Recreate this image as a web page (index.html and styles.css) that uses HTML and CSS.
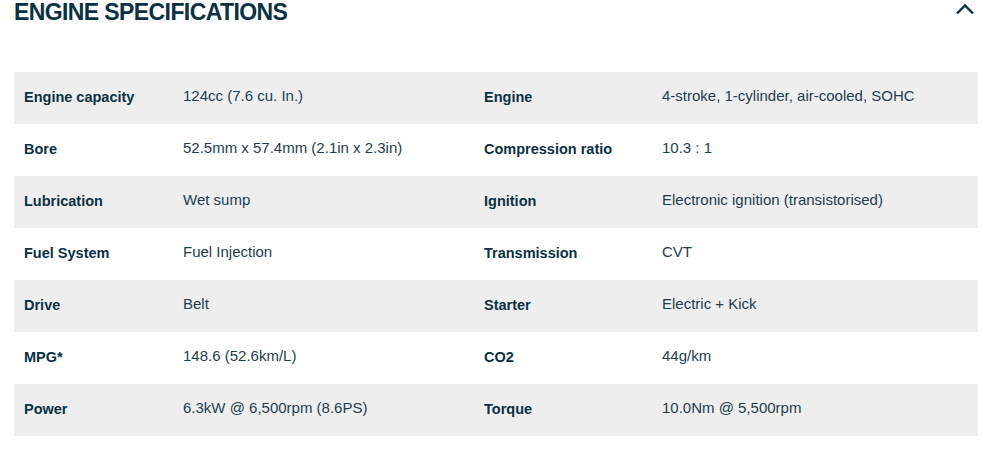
FILE: index.html
```html
<!DOCTYPE html>
<html>
<head>
<meta charset="utf-8">
<link rel="stylesheet" href="styles.css">
</head>
<body>
<section class="specs">
  <div class="specs-head">
    <h2 class="specs-title">ENGINE SPECIFICATIONS</h2>
    <svg class="chevron" width="20" height="12" viewBox="0 0 20 12"><path d="M2 10.5 L10 2.5 L18 10.5" fill="none" stroke="#0b3142" stroke-width="2.4"/></svg>
  </div>
  <div class="specs-table">
    <div class="row alt"><div class="lbl">Engine capacity</div><div class="val">124cc (7.6 cu. In.)</div><div class="lbl">Engine</div><div class="val">4-stroke, 1-cylinder, air-cooled, SOHC</div></div>
    <div class="row"><div class="lbl">Bore</div><div class="val">52.5mm x 57.4mm (2.1in x 2.3in)</div><div class="lbl">Compression ratio</div><div class="val">10.3 : 1</div></div>
    <div class="row alt"><div class="lbl">Lubrication</div><div class="val">Wet sump</div><div class="lbl">Ignition</div><div class="val">Electronic ignition (transistorised)</div></div>
    <div class="row"><div class="lbl">Fuel System</div><div class="val">Fuel Injection</div><div class="lbl">Transmission</div><div class="val">CVT</div></div>
    <div class="row alt"><div class="lbl">Drive</div><div class="val">Belt</div><div class="lbl">Starter</div><div class="val">Electric + Kick</div></div>
    <div class="row"><div class="lbl">MPG*</div><div class="val">148.6 (52.6km/L)</div><div class="lbl">CO2</div><div class="val">44g/km</div></div>
    <div class="row alt"><div class="lbl">Power</div><div class="val">6.3kW @ 6,500rpm (8.6PS)</div><div class="lbl">Torque</div><div class="val">10.0Nm @ 5,500rpm</div></div>
  </div>
</section>
</body>
</html>
```
FILE: styles.css
```css
html, body { margin: 0; padding: 0; background: #fff; }
body { font-family: "Liberation Sans", Arial, sans-serif; color: #0b3142; }
.specs { padding: 0 14px; }
.specs-head { display: flex; justify-content: space-between; align-items: flex-start; height: 72px; }
.specs-title { margin: 0; padding-top: 1px; font-size: 23px; line-height: 23px; font-weight: 700; letter-spacing: -0.6px; color: #0b3142; }
.chevron { margin-top: 3px; margin-right: 3px; }
.specs-table { display: flex; flex-direction: column; }
.row { display: grid; grid-template-columns: 159px 301px 178px 1fr; height: 52px; align-items: center; }
.row.alt { background: #eeeeee; }
.lbl { padding-left: 10px; font-weight: 700; font-size: 14.5px; color: #0b3142; padding-bottom: 3px; }
.val { padding-left: 10px; font-size: 15px; color: #1f3d4d; padding-bottom: 6px; }
```
